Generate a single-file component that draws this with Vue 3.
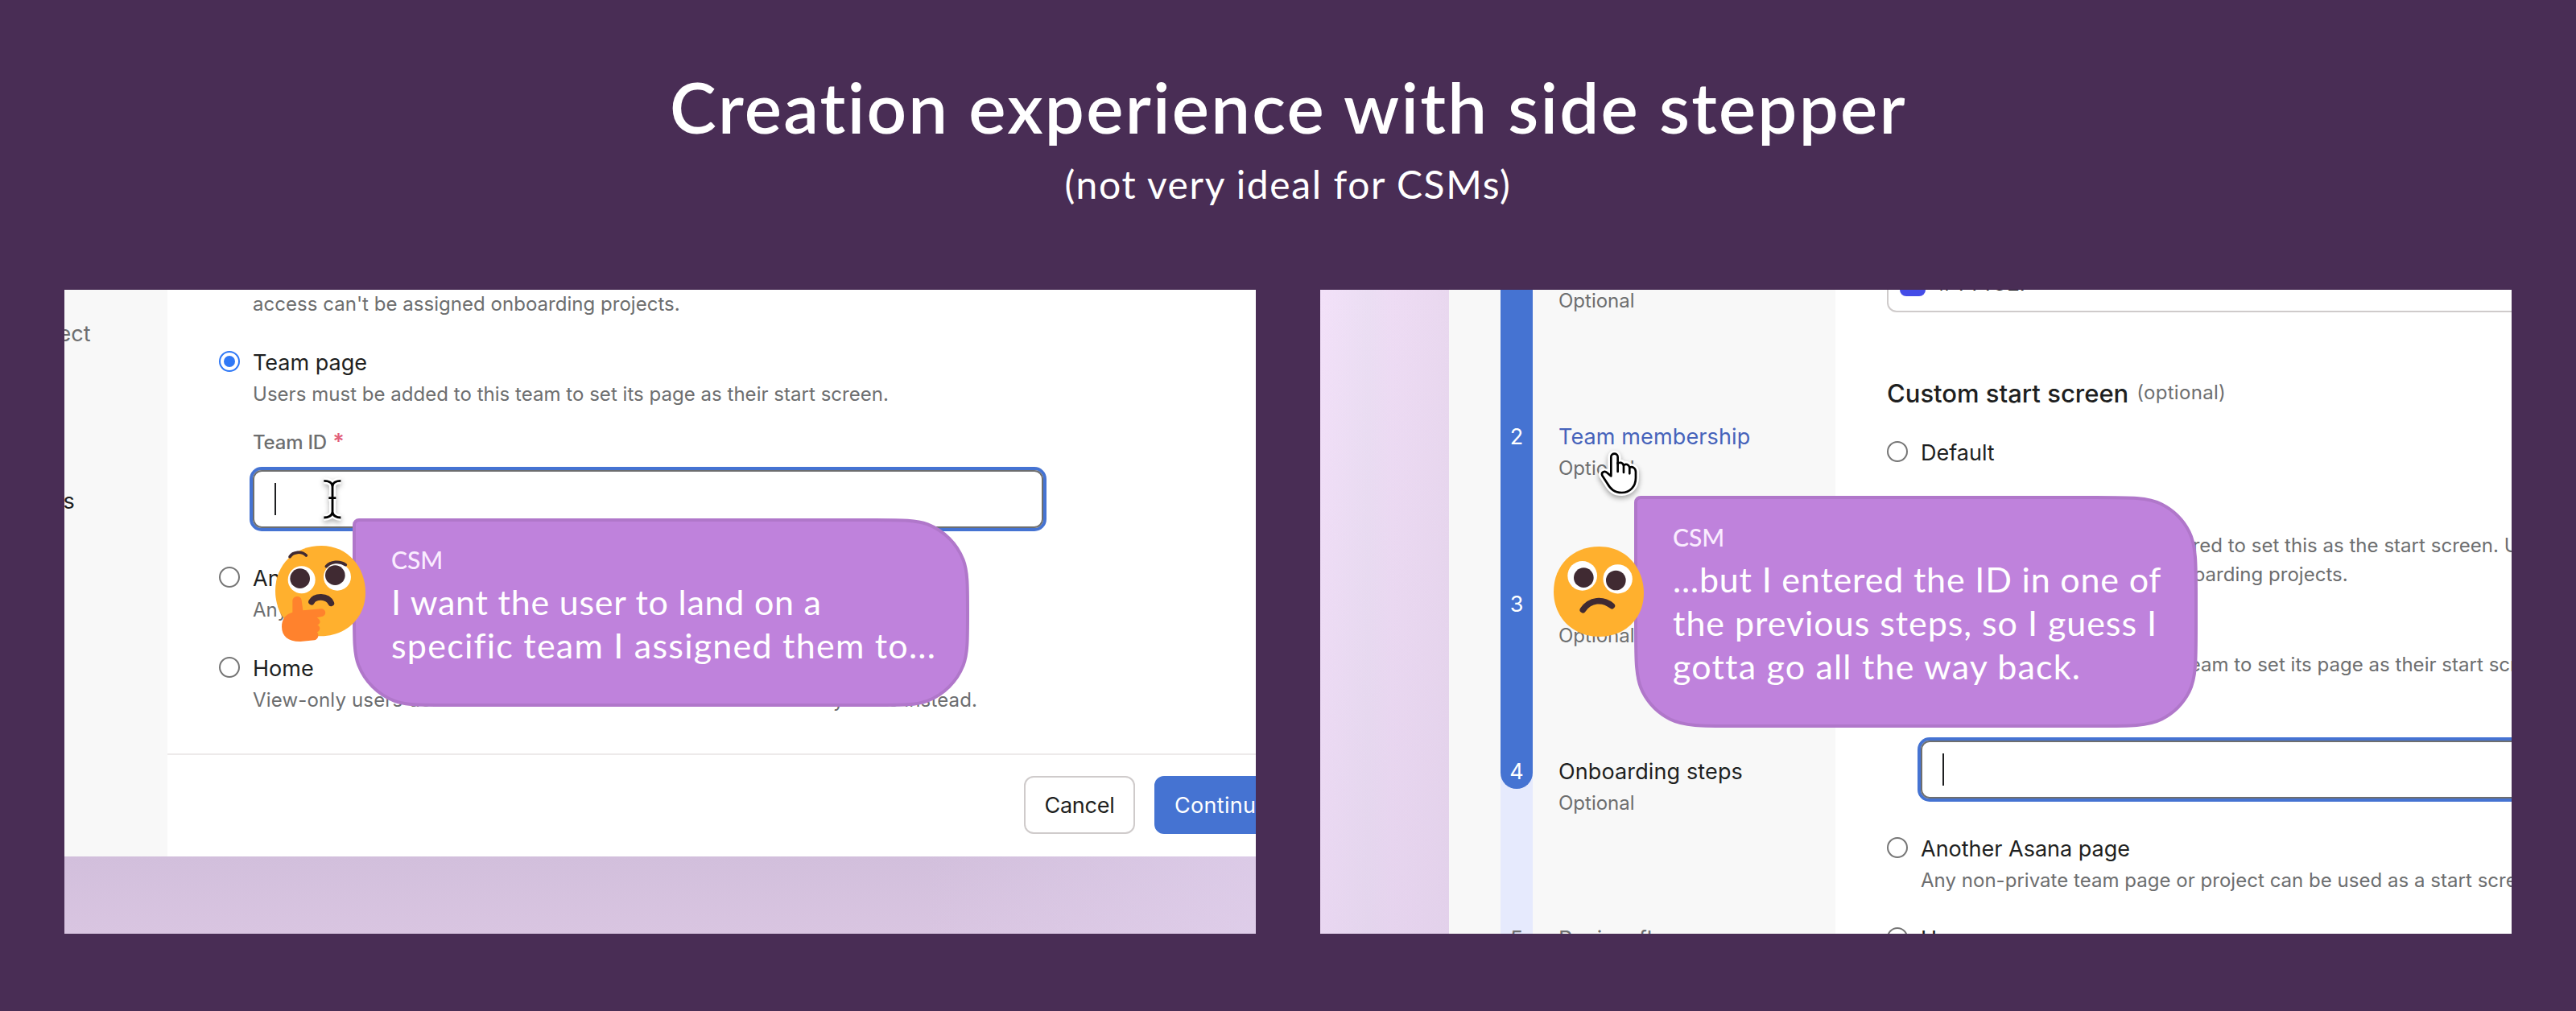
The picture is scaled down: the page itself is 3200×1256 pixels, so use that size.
<script setup>
const views = [
  {
    id: 'typing',
    bubble: { w: 766, h: 234 },
    lines: [
      { text: 'I want the user to land on a', ls: 0.76 },
      { text: 'specific team I assigned them to...', ls: 1.24 },
    ],
  },
  {
    id: 'returning',
    bubble: { w: 700, h: 288 },
    lines: [
      { text: '...but I entered the ID in one of', ls: 0.82 },
      { text: 'the previous steps, so I guess I', ls: 0.96 },
      { text: 'gotta go all the way back.', ls: 1.2 },
    ],
  },
]

const steps = [
  { title: 'Basic information', note: 'Optional', state: 'done' },
  { title: 'Team membership', note: 'Optional', state: 'link' },
  { title: 'Onboarding project', note: 'Optional', state: 'done' },
  { title: 'Onboarding steps', note: 'Optional', state: 'current' },
  { title: 'Review flow', note: '', state: 'todo' },
]

const options = [
  { title: 'Default', desc: [] },
  {
    title: 'Onboarding project',
    lead: 'Access to the project is ',
    desc: [
      'required to set this as the start screen. Users with view-only',
      "access can't be assigned onboarding projects.",
    ],
  },
  {
    title: 'Team page',
    checked: true,
    desc: ['Users must be added to this team to set its page as their start screen.'],
  },
  {
    title: 'Another Asana page',
    desc: ['Any non-private team page or project can be used as a start screen.'],
  },
  {
    title: 'Home',
    wide: true,
    desc: ["View-only users don't have access to Home and will land on My tasks instead."],
  },
]

// Rounded rectangle with smoothed corners; the top-left corner stays tight.
function bubblePath({ w, h }, inset = 2, radius = 80, tight = 8) {
  const l = inset
  const t = inset
  const r = w - inset
  const b = h - inset
  const R = radius - inset
  const p = Math.min(1.6 * R, (h - 2 * inset) / 2)
  const z = p / R - 1
  const rad = Math.PI / 180
  const arc = 90 * (1 - z)
  const len = Math.sin((arc / 2) * rad) * R * Math.SQRT2
  const c = R * Math.tan((((90 - arc) / 2) * rad) / 2) * Math.cos(45 * z * rad)
  const d = c * Math.tan(45 * z * rad)
  const q = (p - len - c - d) / 3
  const a = 2 * q
  const k = tight - inset
  return [
    `M${l + k} ${t}H${r - p}`,
    `c${a} 0 ${a + q} 0 ${a + q + c} ${d}`,
    `a${R} ${R} 0 0 1 ${len} ${len}`,
    `c${d} ${c} ${d} ${q + c} ${d} ${a + q + c}`,
    `V${b - p}`,
    `c0 ${a} 0 ${a + q} ${-d} ${a + q + c}`,
    `a${R} ${R} 0 0 1 ${-len} ${len}`,
    `c${-c} ${d} ${-(q + c)} ${d} ${-(a + q + c)} ${d}`,
    `H${l + p}`,
    `c${-a} 0 ${-(a + q)} 0 ${-(a + q + c)} ${-d}`,
    `a${R} ${R} 0 0 1 ${-len} ${-len}`,
    `c${-d} ${-c} ${-d} ${-(q + c)} ${-d} ${-(a + q + c)}`,
    `V${t + k}`,
    `a${k} ${k} 0 0 1 ${k} ${-k}Z`,
  ].join('')
}
</script>

<template>
  <div class="slide">
    <header class="heading">
      <h1>Creation experience with side stepper</h1>
      <p>(not very ideal for CSMs)</p>
    </header>

    <div class="shots">
      <section v-for="v in views" :key="v.id" class="shot" :class="v.id">
        <div class="page">
          <aside class="sidebar">
            <div class="rail">
              <div class="rail-fill">
                <span v-for="n in 4" :key="n">{{ n }}</span>
              </div>
              <span class="rail-next">5</span>
            </div>
            <div class="steps">
              <div v-for="s in steps" :key="s.title" class="step" :class="s.state">
                <div class="step-title">{{ s.title }}</div>
                <div class="step-note">{{ s.note }}</div>
              </div>
            </div>
          </aside>

          <main class="main">
            <div class="select">
              <i class="swatch"></i>
              <span>#444CE7</span>
            </div>
            <h2>Custom start screen <small>(optional)</small></h2>
            <div class="options">
              <div v-for="o in options" :key="o.title" class="option">
                <div class="option-head">
                  <i class="radio" :class="{ on: o.checked }"></i>
                  <span>{{ o.title }}</span>
                </div>
                <div class="option-body" :class="{ wide: o.wide }">
                  <div v-for="(line, i) in o.desc" :key="line" class="desc">
                    <span v-if="o.lead && i === 0" class="lead">{{ o.lead }}</span>{{ line }}
                  </div>
                  <template v-if="o.checked">
                    <div class="label">Team ID <b>*</b></div>
                    <div class="input"><i class="caret"></i></div>
                  </template>
                </div>
              </div>
            </div>
            <footer class="footer">
              <div class="btn">Cancel</div>
              <div class="btn primary">Continue</div>
            </footer>
          </main>
        </div>

        <svg v-if="v.id === 'typing'" class="ibeam" viewBox="50 35 95 175">
          <g fill="none">
            <path d="M66 51C82 51 98 57 98 73V166C98 181 82 188 66 188M129 51C114 51 98 57 98 73M98 166C98 181 114 188 129 188M84 115H111" stroke="#fff" stroke-width="24" />
            <path d="M66 51C82 51 98 57 98 73V166C98 181 82 188 66 188M129 51C114 51 98 57 98 73M98 166C98 181 114 188 129 188M84 115H111" stroke="#000" stroke-width="8.5" />
          </g>
        </svg>
        <svg v-else class="hand" viewBox="225 50 160 185">
          <path d="M274 153V82C274 66 299 66 299 82V107C305 100 318 103 321 113C328 106 340 110 343 121C353 116 366 123 366 138V160C366 192 344 215 314 215C286 215 272 202 259 179L241 151C236 139 250 132 258 140Z" fill="#fff" stroke="#fff" stroke-width="24" stroke-linejoin="round" />
          <path d="M274 153V82C274 66 299 66 299 82V107C305 100 318 103 321 113C328 106 340 110 343 121C353 116 366 123 366 138V160C366 192 344 215 314 215C286 215 272 202 259 179L241 151C236 139 250 132 258 140Z" fill="#fff" stroke="#000" stroke-width="8" stroke-linejoin="round" />
          <path d="M299 104V137M321 112V140M343 121V144" fill="none" stroke="#000" stroke-width="8" stroke-linecap="round" />
        </svg>

        <div class="bubble" :style="{ width: v.bubble.w + 'px', height: v.bubble.h + 'px' }">
          <svg class="bubble-bg" :viewBox="`0 0 ${v.bubble.w} ${v.bubble.h}`">
            <path :d="bubblePath(v.bubble)" fill="#bf82dc" stroke="#b077ca" stroke-width="4" />
          </svg>
          <div class="bubble-text">
            <div class="who">CSM</div>
            <div v-for="l in v.lines" :key="l.text" class="line" :style="{ letterSpacing: l.ls + 'px' }">{{ l.text }}</div>
          </div>
        </div>

        <svg v-if="v.id === 'typing'" class="emoji thinking" viewBox="66 53 336 358">
          <path d="M66 221C66 122 140 53 238 53C336 53 402 132 402 228C402 324 328 390 235 390C134 390 66 316 66 221Z" fill="#ffb02e" />
          <circle cx="164" cy="180" r="51" fill="#fff" />
          <circle cx="297" cy="169" r="51" fill="#fff" />
          <circle cx="158" cy="175" r="37" fill="#402a32" />
          <circle cx="289" cy="163" r="37" fill="#402a32" />
          <g fill="none" stroke="#402a32" stroke-linecap="round">
            <path d="M120 94C132 75 164 72 181 89" stroke-width="11" />
            <path d="M256 130C272 112 306 108 328 124" stroke-width="11" />
            <path d="M201 262C213 239 260 237 274 267" stroke-width="23" />
          </g>
          <path d="M130 258C132 238 162 237 164 256L169 294L236 288C256 287 260 315 236 318L221 321C236 329 236 344 223 348C236 355 234 370 222 375C230 385 226 403 212 405L160 410C115 411 90 390 90 355C90 325 105 308 130 301Z" fill="#ff822d" />
        </svg>
        <svg v-else class="emoji worried" viewBox="60 417 336 337">
          <path d="M60 585C60 486 132 417 230 417C330 417 396 496 396 590C396 686 325 753 232 753C130 753 60 680 60 585Z" fill="#ffb02e" />
          <circle cx="167" cy="526" r="55" fill="#fff" />
          <circle cx="299" cy="538" r="54.5" fill="#fff" />
          <circle cx="172" cy="533" r="37" fill="#402a32" />
          <circle cx="292" cy="543" r="37" fill="#402a32" />
          <path d="M169 653C196 613 244 611 277 638" fill="none" stroke="#402a32" stroke-width="23" stroke-linecap="round" />
        </svg>
      </section>
    </div>
  </div>
</template>

<style>
body {
  background: #492d55;
}
</style>

<style scoped>
.slide {
  box-sizing: border-box;
  width: 3200px;
  height: 1256px;
  padding: 83px 80px 0;
  overflow: hidden;
  background: #492d55;
  color: #fff;
  font-family: Lato, "Open Sans", sans-serif;
}
.heading {
  height: 277px;
  text-align: center;
}
h1 {
  margin: 0;
  padding-left: 1px;
  font-size: 87px;
  font-weight: 600;
  line-height: 100px;
  letter-spacing: 2.25px;
}
.heading p {
  margin: 16px 0 0;
  font-size: 48px;
  line-height: 60px;
  letter-spacing: 1.6px;
}
.shots {
  display: flex;
  gap: 80px;
}
.shot {
  position: relative;
  width: 1480px;
  height: 800px;
  overflow: hidden;
}
.typing {
  background:
    linear-gradient(90deg, rgba(222, 204, 232, 0) 72%, rgba(226, 210, 238, 0.6)),
    linear-gradient(#d2bfdc 704px, #d9c5e1 100%);
}
.returning {
  background:
    linear-gradient(rgba(214, 195, 226, 0) 0%, rgba(214, 195, 226, 0.34) 100%),
    linear-gradient(90deg, #f3e1f9, #ebdef3 60px, #eedcf4 90px, #e9d8ef 160px);
}

/* Wizard page, seen through each crop */
.page {
  display: flex;
  width: 1928px;
  height: 1084px;
  background: #fff;
  color: #1e1f21;
  font-family: Inter, "Liberation Sans", sans-serif;
  font-size: 27px;
  line-height: 38px;
}
.typing .page {
  margin: -380px 0 0 -352px;
}
.returning .page {
  margin: -44px 0 0 160px;
}
.sidebar {
  box-sizing: border-box;
  display: flex;
  flex: none;
  gap: 32px;
  width: 480px;
  padding-left: 64px;
  background: #f8f8f8;
}
.rail {
  width: 40px;
  background: #e6eafd;
  color: #6d6e6f;
  text-align: center;
}
.rail-fill {
  height: 664px;
  border-radius: 0 0 20px 20px;
  background: #4573d2;
  color: #fff;
}
.rail-fill span {
  display: block;
  height: 208px;
}
.rail-fill span:last-child {
  height: 40px;
}
.rail-next {
  display: block;
  margin-top: 168px;
}
.step {
  height: 208px;
}
.step-title,
.todo .step-title {
  color: #6d6e6f;
  letter-spacing: 0.12px;
}
.link .step-title {
  color: #4663bb;
}
.current .step-title {
  color: #1e1f21;
}
.step-note {
  margin-top: 6px;
  color: #6d6e6f;
  font-size: 24px;
  line-height: 28px;
}
.main {
  display: flex;
  flex: 1;
  flex-direction: column;
}
.select {
  box-sizing: border-box;
  display: flex;
  align-items: center;
  gap: 16px;
  width: 1024px;
  height: 72px;
  margin-left: 64px;
  padding: 2px 14px 0;
  border: 2px solid #cfcbcb;
  border-top: 0;
  border-radius: 0 0 12px 12px;
  letter-spacing: -0.9px;
}
.swatch {
  width: 32px;
  height: 32px;
  border-radius: 8px;
  background: #444ce7;
}
h2 {
  display: flex;
  gap: 10px;
  margin: 81px 0 0 64px;
  font-size: 31px;
  font-weight: 500;
  line-height: 40px;
}
h2 small {
  color: #6d6e6f;
  font-size: 24px;
  font-weight: 400;
  line-height: 37px;
  letter-spacing: 0.3px;
}
.options {
  display: flex;
  flex-direction: column;
  gap: 37px;
  margin: 35px 0 0 64px;
}
.option-head {
  display: flex;
  align-items: center;
  gap: 16px;
  height: 36px;
  margin-bottom: 3px;
}
.option-head span {
  padding-top: 2px;
}
.radio {
  box-sizing: border-box;
  display: grid;
  place-items: center;
  width: 26px;
  height: 26px;
  margin-bottom: 2px;
  border: 2px solid #767676;
  border-radius: 50%;
}
.radio.on {
  border-color: #2f78f6;
}
.radio.on::after {
  width: 14px;
  height: 14px;
  border-radius: 50%;
  background: #2f78f6;
  content: "";
}
.option-body {
  margin-left: 42px;
}
.desc {
  height: 36px;
  color: #6d6e6f;
  font-size: 24px;
  line-height: 38px;
  letter-spacing: 0.03px;
  white-space: nowrap;
}
.wide .desc {
  letter-spacing: 0.16px;
}
.lead {
  letter-spacing: 0.3px;
  white-space: pre;
}
.label {
  height: 32px;
  margin-top: 26px;
  color: #6d6e6f;
  font-size: 24px;
  font-weight: 500;
  line-height: 34px;
  letter-spacing: -0.2px;
}
.label b {
  margin-left: 1px;
  color: #e2607a;
  font-size: 27px;
  font-weight: 600;
  line-height: 1;
}
.input {
  box-sizing: border-box;
  display: flex;
  align-items: center;
  width: 982px;
  height: 72px;
  margin: 19px 0 7px;
  padding-left: 25px;
  border: 2px solid #6d6e6f;
  border-radius: 11px;
  box-shadow: 0 0 0 4px #4573d2;
}
.caret {
  width: 2px;
  height: 40px;
  background: #1e1f21;
}
.footer {
  display: flex;
  justify-content: flex-end;
  gap: 24px;
  margin-top: 49px;
  padding: 26px 64px 28px 0;
  border-top: 2px solid #edeaea;
}
.btn {
  box-sizing: border-box;
  width: 138px;
  height: 72px;
  border: 2px solid #cfcbcb;
  border-radius: 12px;
  line-height: 69px;
  text-align: center;
  letter-spacing: -0.25px;
}
.btn.primary {
  width: 158px;
  padding-left: 23px;
  border-color: #4573d2;
  background: #4573d2;
  color: #fff;
  text-align: left;
  letter-spacing: 0.3px;
}

/* Overlays */
.ibeam,
.hand,
.bubble,
.emoji {
  position: absolute;
}
.ibeam {
  top: 231.7px;
  left: 316.7px;
  width: 31.7px;
  height: 58.3px;
  overflow: visible;
  filter: drop-shadow(0 3px 3px rgba(0, 0, 0, 0.3));
}
.hand {
  top: 196.7px;
  left: 345px;
  width: 53.3px;
  height: 61.7px;
  overflow: visible;
  filter: drop-shadow(0 3px 3px rgba(0, 0, 0, 0.35));
}
.typing .bubble {
  top: 284px;
  left: 358px;
}
.returning .bubble {
  top: 256px;
  left: 390px;
}
.bubble-bg {
  position: absolute;
  inset: 0;
}
.bubble-text {
  position: relative;
  padding: 33px 0 0 48px;
}
.who {
  margin-bottom: 8px;
  color: #faecff;
  font-size: 30px;
  font-weight: 500;
  line-height: 36px;
}
.line {
  font-size: 43px;
  line-height: 54px;
  white-space: nowrap;
}
.thinking {
  top: 318px;
  left: 262px;
  width: 112px;
  height: 119.3px;
}
.worried {
  top: 319px;
  left: 290px;
  width: 112px;
  height: 112.3px;
}
</style>
